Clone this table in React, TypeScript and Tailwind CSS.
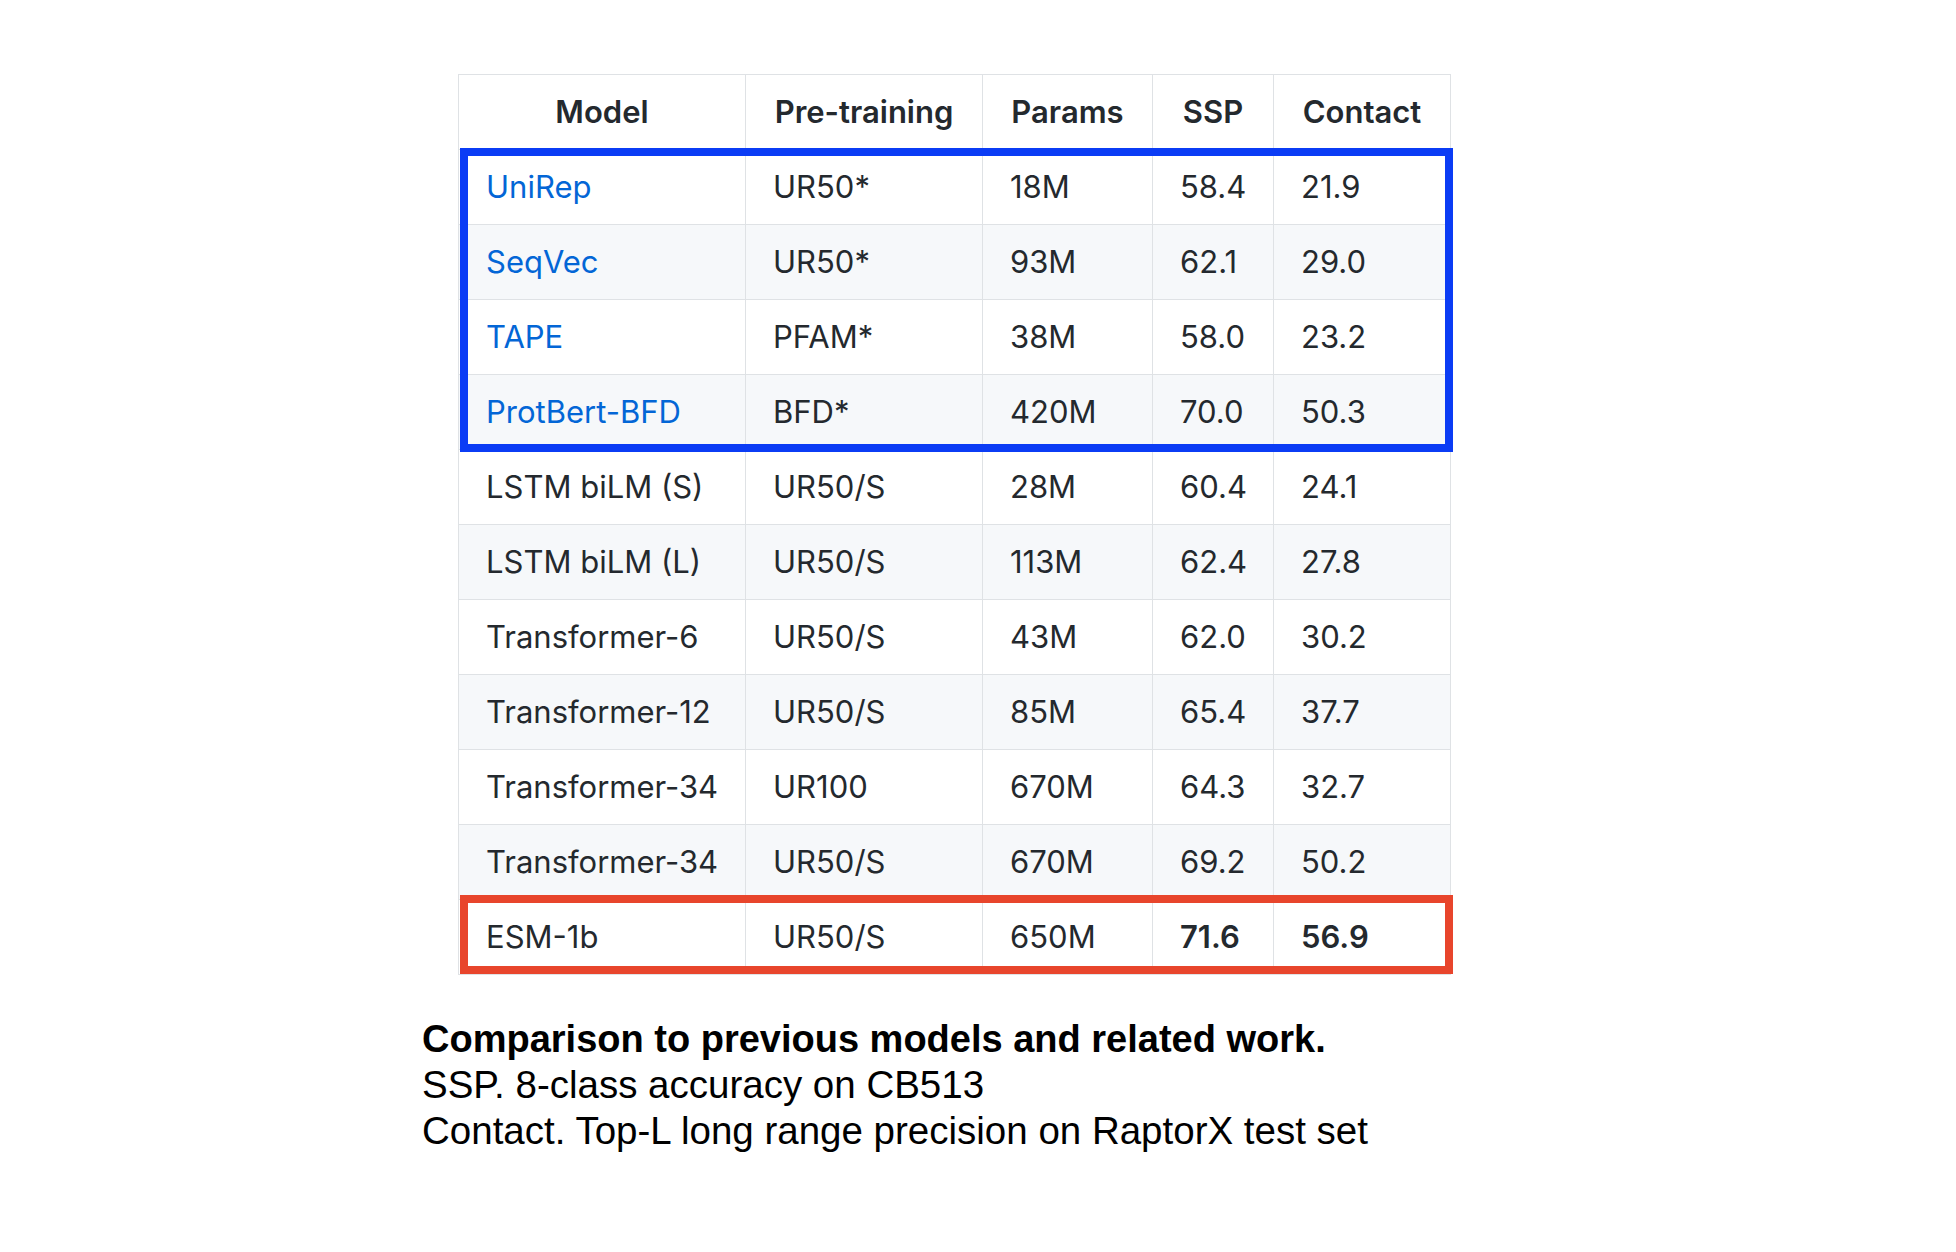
import React from "react";

type Row = {
  model: string;
  link?: boolean;
  pre: string;
  params: string;
  ssp: string;
  contact: string;
  bold?: boolean;
};

const rows: Row[] = [
  { model: "UniRep", link: true, pre: "UR50*", params: "18M", ssp: "58.4", contact: "21.9" },
  { model: "SeqVec", link: true, pre: "UR50*", params: "93M", ssp: "62.1", contact: "29.0" },
  { model: "TAPE", link: true, pre: "PFAM*", params: "38M", ssp: "58.0", contact: "23.2" },
  { model: "ProtBert-BFD", link: true, pre: "BFD*", params: "420M", ssp: "70.0", contact: "50.3" },
  { model: "LSTM biLM (S)", pre: "UR50/S", params: "28M", ssp: "60.4", contact: "24.1" },
  { model: "LSTM biLM (L)", pre: "UR50/S", params: "113M", ssp: "62.4", contact: "27.8" },
  { model: "Transformer-6", pre: "UR50/S", params: "43M", ssp: "62.0", contact: "30.2" },
  { model: "Transformer-12", pre: "UR50/S", params: "85M", ssp: "65.4", contact: "37.7" },
  { model: "Transformer-34", pre: "UR100", params: "670M", ssp: "64.3", contact: "32.7" },
  { model: "Transformer-34", pre: "UR50/S", params: "670M", ssp: "69.2", contact: "50.2" },
  { model: "ESM-1b", pre: "UR50/S", params: "650M", ssp: "71.6", contact: "56.9", bold: true },
];

const th =
  "h-[75px] whitespace-nowrap border border-[#dfe2e5] px-[27px] text-center font-semibold text-[#24292e]";
const td = "h-[75px] whitespace-nowrap border border-[#dfe2e5] pl-[27px] pr-[8px] text-left";

export default function App() {
  return (
    <div className="min-h-[1252px] w-[1956px] bg-white">
      <div className="pl-[458px] pt-[74px]">
        <div className="relative w-[992px]">
          <table
            className="w-[992px] table-fixed border-collapse text-[31px] leading-[36px] text-[#24292e]"
            style={{ fontFamily: "Inter, 'Liberation Sans', sans-serif" }}
          >
            <colgroup>
              <col className="w-[287px]" />
              <col className="w-[237px]" />
              <col className="w-[170px]" />
              <col className="w-[121px]" />
              <col className="w-[177px]" />
            </colgroup>
            <thead>
              <tr className="bg-white">
                <th className={th}>Model</th>
                <th className={th}>Pre-training</th>
                <th className={th}>Params</th>
                <th className={th}>SSP</th>
                <th className={th}>Contact</th>
              </tr>
            </thead>
            <tbody>
              {rows.map((r, i) => (
                <tr key={i} className={i % 2 === 1 ? "bg-[#f6f8fa]" : "bg-white"}>
                  <td className={td}>
                    {r.link ? <span className="text-[#0366d6]">{r.model}</span> : r.model}
                  </td>
                  <td className={td}>{r.pre}</td>
                  <td className={td}>{r.params}</td>
                  <td className={td}>{r.bold ? <span className="font-semibold">{r.ssp}</span> : r.ssp}</td>
                  <td className={td}>{r.bold ? <span className="font-semibold">{r.contact}</span> : r.contact}</td>
                </tr>
              ))}
            </tbody>
          </table>
          <div className="pointer-events-none absolute left-[2px] top-[74px] h-[304px] w-[993px] border-[8px] border-[#0b3cf5]" />
          <div className="pointer-events-none absolute left-[2px] top-[821px] h-[79px] w-[993px] border-[8px] border-[#e8452c]" />
        </div>
      </div>
      <div
        className="mt-[41px] pl-[422px] text-[38.5px] leading-[46px] text-black"
        style={{ fontFamily: "'Liberation Sans', Arial, sans-serif" }}
      >
        <div className="text-[38px] font-bold">Comparison to previous models and related work.</div>
        <div>SSP. 8-class accuracy on CB513</div>
        <div>Contact. Top-L long range precision on RaptorX test set</div>
      </div>
    </div>
  );
}
